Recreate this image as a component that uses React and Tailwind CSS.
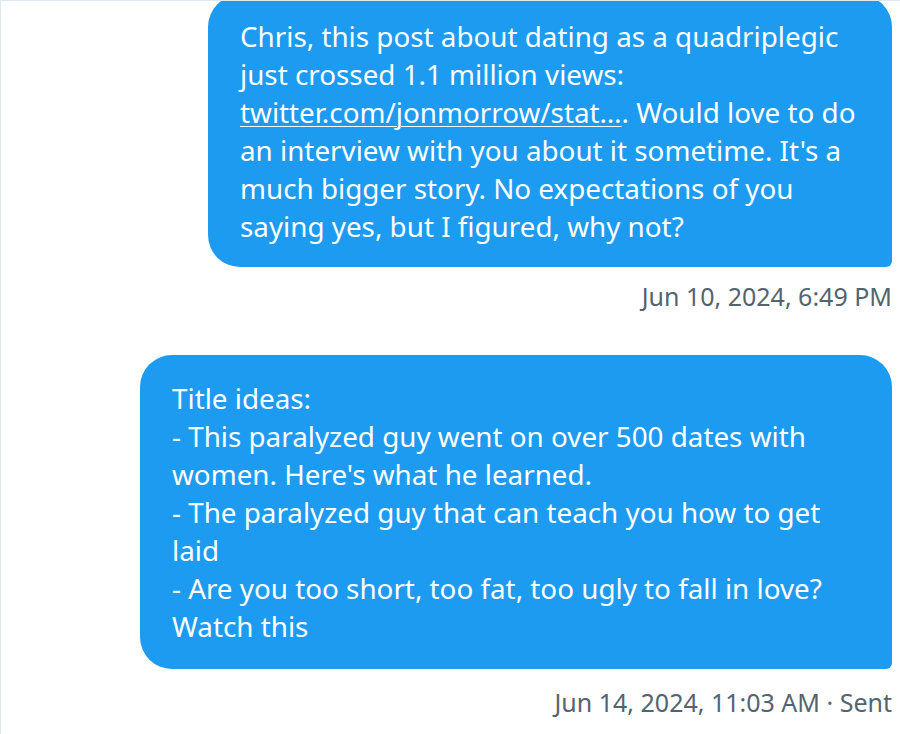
export default function App() {
  const font = { fontFamily: '"Segoe UI", "Noto Sans", "Open Sans", sans-serif' };
  return (
    <div
      className="w-[900px] h-[734px] bg-white border-l border-t border-[#e1e8ed] overflow-hidden flex flex-col items-end pr-[8px]"
      style={font}
    >
      <div className="mt-[-6px] w-[684px] bg-[#1d9bf0] text-white rounded-[32px] rounded-br-[6px] px-[32px] py-[22px] text-[27.8px] leading-[38px] whitespace-nowrap">
        <div>Chris, this post about dating as a quadriplegic</div>
        <div>just crossed 1.1 million views:</div>
        <div>
          <span className="underline decoration-1 underline-offset-[3px]">twitter.com/jonmorrow/stat…</span>. Would love to do
        </div>
        <div>an interview with you about it sometime. It's a</div>
        <div>much bigger story. No expectations of you</div>
        <div>saying yes, but I figured, why not?</div>
      </div>
      <div className="mt-[15px] text-[25px] leading-[28px] text-[#536471]">Jun 10, 2024, 6:49 PM</div>

      <div className="mt-[45px] w-[752px] bg-[#1d9bf0] text-white rounded-[32px] rounded-br-[6px] px-[32px] py-[24px] text-[27.8px] leading-[38px] whitespace-nowrap">
        <div>Title ideas:</div>
        <div>- This paralyzed guy went on over 500 dates with</div>
        <div>women. Here's what he learned.</div>
        <div>- The paralyzed guy that can teach you how to get</div>
        <div>laid</div>
        <div>- Are you too short, too fat, too ugly to fall in love?</div>
        <div>Watch this</div>
      </div>
      <div className="mt-[19px] text-[25px] leading-[28px] text-[#536471]">Jun 14, 2024, 11:03 AM · Sent</div>
    </div>
  );
}
